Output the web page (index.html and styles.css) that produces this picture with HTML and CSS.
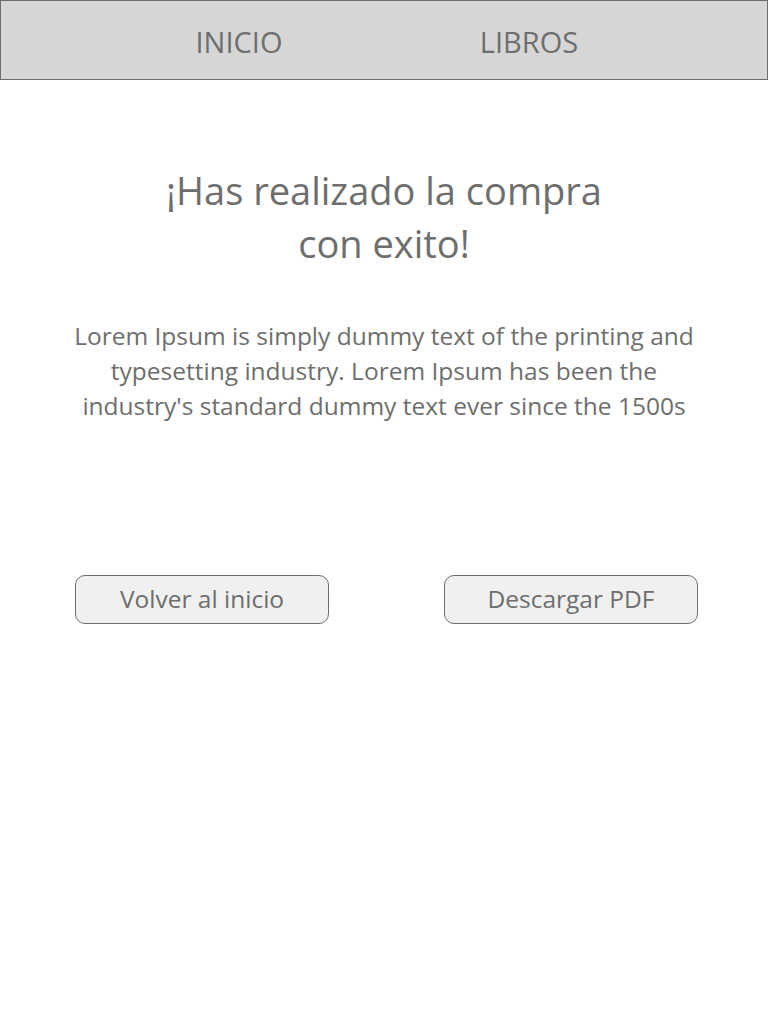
FILE: index.html
```html
<!DOCTYPE html>
<html lang="es">
<head>
<meta charset="utf-8">
<title>Compra realizada</title>
<link rel="stylesheet" href="styles.css">
</head>
<body>
<header class="topbar">
  <nav class="nav">
    <a class="nav-link" href="#">INICIO</a>
    <a class="nav-link" href="#">LIBROS</a>
  </nav>
</header>
<main class="content">
  <h1 class="title">¡Has realizado la compra<br>con exito!</h1>
  <p class="lead">Lorem Ipsum is simply dummy text of the printing and typesetting industry. Lorem Ipsum has been the industry's standard dummy text ever since the 1500s</p>
  <div class="actions">
    <button class="btn" type="button">Volver al inicio</button>
    <button class="btn" type="button">Descargar PDF</button>
  </div>
</main>
</body>
</html>
```
FILE: styles.css
```css
* { box-sizing: border-box; }
html, body { margin: 0; padding: 0; background: #ffffff; }
body {
  font-family: "Open Sans", "Noto Sans", "Liberation Sans", sans-serif;
  color: #6e6e6e;
  width: 768px;
  height: 1024px;
}
.topbar {
  height: 80px;
  background: #d6d6d6;
  border: 1px solid #6e6e6e;
}
.nav {
  display: flex;
  justify-content: center;
  align-items: center;
  height: 100%;
}
.nav-link {
  width: 290px;
  text-align: center;
  color: #6e6e6e;
  text-decoration: none;
  font-size: 29px;
  line-height: 1;
  padding-top: 2px;
}
.content {
  display: flex;
  flex-direction: column;
  align-items: center;
  padding-top: 84px;
}
.title {
  margin: 0;
  font-weight: 400;
  font-size: 38px;
  line-height: 53px;
  text-align: center;
}
.lead {
  margin: 48px 0 0;
  width: 632px;
  font-size: 24.5px;
  line-height: 35px;
  text-align: center;
}
.actions {
  align-self: stretch;
  display: flex;
  justify-content: space-between;
  margin: 152px 70px 0 75px;
}
.btn {
  width: 254px;
  height: 49px;
  border: 1px solid #6e6e6e;
  border-radius: 10px;
  background: #f0f0f0;
  color: #6e6e6e;
  font-family: inherit;
  font-size: 24.5px;
  padding: 0 0 2px;
}
```
